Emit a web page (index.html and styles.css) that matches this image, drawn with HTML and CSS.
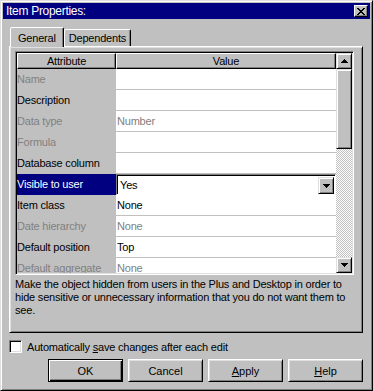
FILE: index.html
```html
<!DOCTYPE html>
<html lang="en">
<head>
  <meta charset="UTF-8" />
  <meta name="viewport" content="width=device-width, initial-scale=1.0" />
  <title>Item Properties</title>
  <link rel="stylesheet" href="styles.css">
</head>
<body>
  <div class="window">
    <div class="titlebar">
      <span class="title">Item Properties:</span>
      <button type="button" class="close-btn" aria-label="Close">
        <svg width="8" height="7" viewBox="0 0 8 7" shape-rendering="crispEdges"><path fill="#000" d="M0 0h2v1H0zM6 0h2v1H6zM1 1h2v1H1zM5 1h2v1H5zM2 2h4v1H2zM3 3h2v1H3zM2 4h4v1H2zM1 5h2v1H1zM5 5h2v1H5zM0 6h2v1H0zM6 6h2v1H6z"/></svg>
      </button>
    </div>

    <div class="content">
      <div class="tabs">
        <div class="tab active">General</div>
        <div class="tab">Dependents</div>
      </div>

      <div class="panel">
        <div class="grid">
          <div class="sheet">
            <div class="head">
              <div>Attribute</div>
              <div>Value</div>
            </div>
            <div class="row"><div class="attr dim">Name</div><div class="val"></div></div>
            <div class="row"><div class="attr">Description</div><div class="val"></div></div>
            <div class="row"><div class="attr dim">Data type</div><div class="val dim">Number</div></div>
            <div class="row"><div class="attr dim">Formula</div><div class="val"></div></div>
            <div class="row"><div class="attr">Database column</div><div class="val"></div></div>
            <div class="row selected">
              <div class="attr">Visible to user</div>
              <div class="val">
                <div class="combo">
                  <span class="combo-text">Yes</span>
                  <span class="combo-btn">
                    <svg width="7" height="4" viewBox="0 0 7 4" shape-rendering="crispEdges"><path fill="#000" d="M0 0h7v1H0zM1 1h5v1H1zM2 2h3v1H2zM3 3h1v1H3z"/></svg>
                  </span>
                </div>
              </div>
            </div>
            <div class="row"><div class="attr">Item class</div><div class="val">None</div></div>
            <div class="row"><div class="attr dim">Date hierarchy</div><div class="val dim">None</div></div>
            <div class="row"><div class="attr">Default position</div><div class="val">Top</div></div>
            <div class="row"><div class="attr dim">Default aggregate</div><div class="val dim">None</div></div>
          </div>

          <div class="scrollbar">
            <div class="sb-btn">
              <svg width="7" height="4" viewBox="0 0 7 4" shape-rendering="crispEdges"><path fill="#000" d="M3 0h1v1H3zM2 1h3v1H2zM1 2h5v1H1zM0 3h7v1H0z"/></svg>
            </div>
            <div class="sb-thumb"></div>
            <div class="sb-track"></div>
            <div class="sb-btn">
              <svg width="7" height="4" viewBox="0 0 7 4" shape-rendering="crispEdges"><path fill="#000" d="M0 0h7v1H0zM1 1h5v1H1zM2 2h3v1H2zM3 3h1v1H3z"/></svg>
            </div>
          </div>
        </div>

        <p class="hint">Make the object hidden from users in the Plus and Desktop in order to hide sensitive or unnecessary information that you do not want them to see.</p>
      </div>

      <label class="autosave">
        <span class="check"></span>
        <span>Automatically <u>s</u>ave changes after each edit</span>
      </label>

      <div class="actions">
        <button type="button" class="btn default">OK</button>
        <button type="button" class="btn">Cancel</button>
        <button type="button" class="btn"><u>A</u>pply</button>
        <button type="button" class="btn"><u>H</u>elp</button>
      </div>
    </div>
  </div>
</body>
</html>
```

FILE: styles.css
```css
* {
  box-sizing: border-box;
}
body {
  margin: 0;
  font-family: "Liberation Sans", Arial, sans-serif;
  font-size: 11px;
  letter-spacing: -0.2px;
  color: #000;
  background: #c0c0c0;
}
.window {
  width: 373px;
  height: 391px;
  display: flex;
  flex-direction: column;
  padding: 2px;
  background: #c0c0c0;
  border: 1px solid;
  border-color: #dfdfdf #000 #000 #dfdfdf;
  box-shadow: inset 1px 1px #fff, inset -1px -1px #808080;
}
.titlebar {
  height: 16px;
  display: flex;
  align-items: center;
  justify-content: space-between;
  padding: 0 2px 0 3px;
  background: #000080;
  color: #fff;
}
.title {
  font-size: 12px;
  letter-spacing: -0.3px;
}
.close-btn {
  width: 14px;
  height: 12px;
  padding: 0;
  display: flex;
  align-items: center;
  justify-content: center;
  background: #c0c0c0;
  border: 1px solid;
  border-color: #fff #000 #000 #fff;
  box-shadow: inset -1px -1px #808080;
}
.content {
  flex: 1;
  display: flex;
  flex-direction: column;
  padding: 8px 7px 0 6px;
}

/* tabs */
.tabs {
  display: flex;
  align-items: flex-end;
  height: 19px;
  position: relative;
  z-index: 1;
}
.tab {
  height: 17px;
  display: flex;
  align-items: center;
  padding: 0 4px;
  border: 1px solid;
  border-bottom: none;
  border-color: #fff #000 transparent #fff;
  border-radius: 2px 2px 0 0;
  box-shadow: inset -1px 0 #808080;
}
.tab.active {
  height: 20px;
  margin-bottom: -1px;
  margin-left: 1px;
  padding: 0 7px;
  background: #c0c0c0;
}
.panel {
  height: 287px;
  padding: 4px 8px 0 5px;
  border: 1px solid;
  border-color: #fff #000 #000 #fff;
  box-shadow: inset 1px 1px #dfdfdf, inset -1px -1px #808080;
}

/* property grid */
.grid {
  height: 224px;
  display: flex;
  padding: 1px;
  overflow: hidden;
  border: 1px solid;
  border-color: #808080 #fff #fff #808080;
  box-shadow: inset 1px 1px #000, inset -1px -1px #dfdfdf;
}
.sheet {
  flex: 1;
  overflow: hidden;
}
.head, .row {
  display: grid;
  grid-template-columns: 99px 1fr;
}
.head > div {
  height: 16px;
  line-height: 14px;
  text-align: center;
  border: 1px solid;
  border-color: #fff #000 #000 #fff;
  box-shadow: inset -1px -1px #808080;
}
.row {
  height: 21px;
}
.attr {
  line-height: 21px;
  background: #c0c0c0;
  white-space: nowrap;
}
.val {
  line-height: 20px;
  padding-left: 1px;
  background: #fff;
  border-bottom: 1px solid #c0c0c0;
}
.dim {
  color: #808080;
}
.row.selected .attr {
  background: #000080;
  color: #fff;
}
.row.selected .val {
  padding: 0;
  border: none;
}
.combo {
  height: 21px;
  display: flex;
  padding: 2px 1px 2px 2px;
  background: #fff;
  border: 1px solid;
  border-color: #808080 #fff #fff #808080;
  box-shadow: inset 1px 1px #000;
}
.combo-text {
  flex: 1;
  line-height: 17px;
  padding-left: 1px;
}
.combo-btn {
  width: 16px;
  height: 17px;
  display: flex;
  align-items: center;
  justify-content: center;
  background: #c0c0c0;
  border: 1px solid;
  border-color: #dfdfdf #000 #000 #dfdfdf;
  box-shadow: inset 1px 1px #fff, inset -1px -1px #808080;
}

/* scrollbar */
.scrollbar {
  width: 16px;
  display: flex;
  flex-direction: column;
  background: repeating-conic-gradient(#c0c0c0 0 25%, #fff 0 50%) 0 0 / 2px 2px;
}
.sb-btn, .sb-thumb {
  background: #c0c0c0;
  border: 1px solid;
  border-color: #dfdfdf #000 #000 #dfdfdf;
  box-shadow: inset 1px 1px #fff, inset -1px -1px #808080;
}
.sb-btn {
  height: 16px;
  display: flex;
  align-items: center;
  justify-content: center;
}
.sb-thumb {
  height: 80px;
}
.sb-track {
  flex: 1;
}
.hint {
  margin: 3px 0 0;
  line-height: 13px;
}

/* footer */
.autosave {
  height: 13px;
  display: flex;
  align-items: center;
  gap: 5px;
  margin-top: 7px;
}
.check {
  width: 13px;
  height: 13px;
  background: #fff;
  border: 1px solid;
  border-color: #808080 #fff #fff #808080;
  box-shadow: inset 1px 1px #000, inset -1px -1px #dfdfdf;
}
.actions {
  display: flex;
  justify-content: flex-end;
  gap: 5px;
  margin-top: 6px;
}
.btn {
  width: 75px;
  height: 23px;
  padding: 0;
  font: inherit;
  color: #000;
  background: #c0c0c0;
  border: 1px solid;
  border-color: #fff #000 #000 #fff;
  box-shadow: inset 1px 1px #dfdfdf, inset -1px -1px #808080;
}
.btn.default {
  border-color: #000;
  box-shadow: inset 1px 1px #fff, inset -1px -1px #000, inset -2px -2px #808080;
}
```
